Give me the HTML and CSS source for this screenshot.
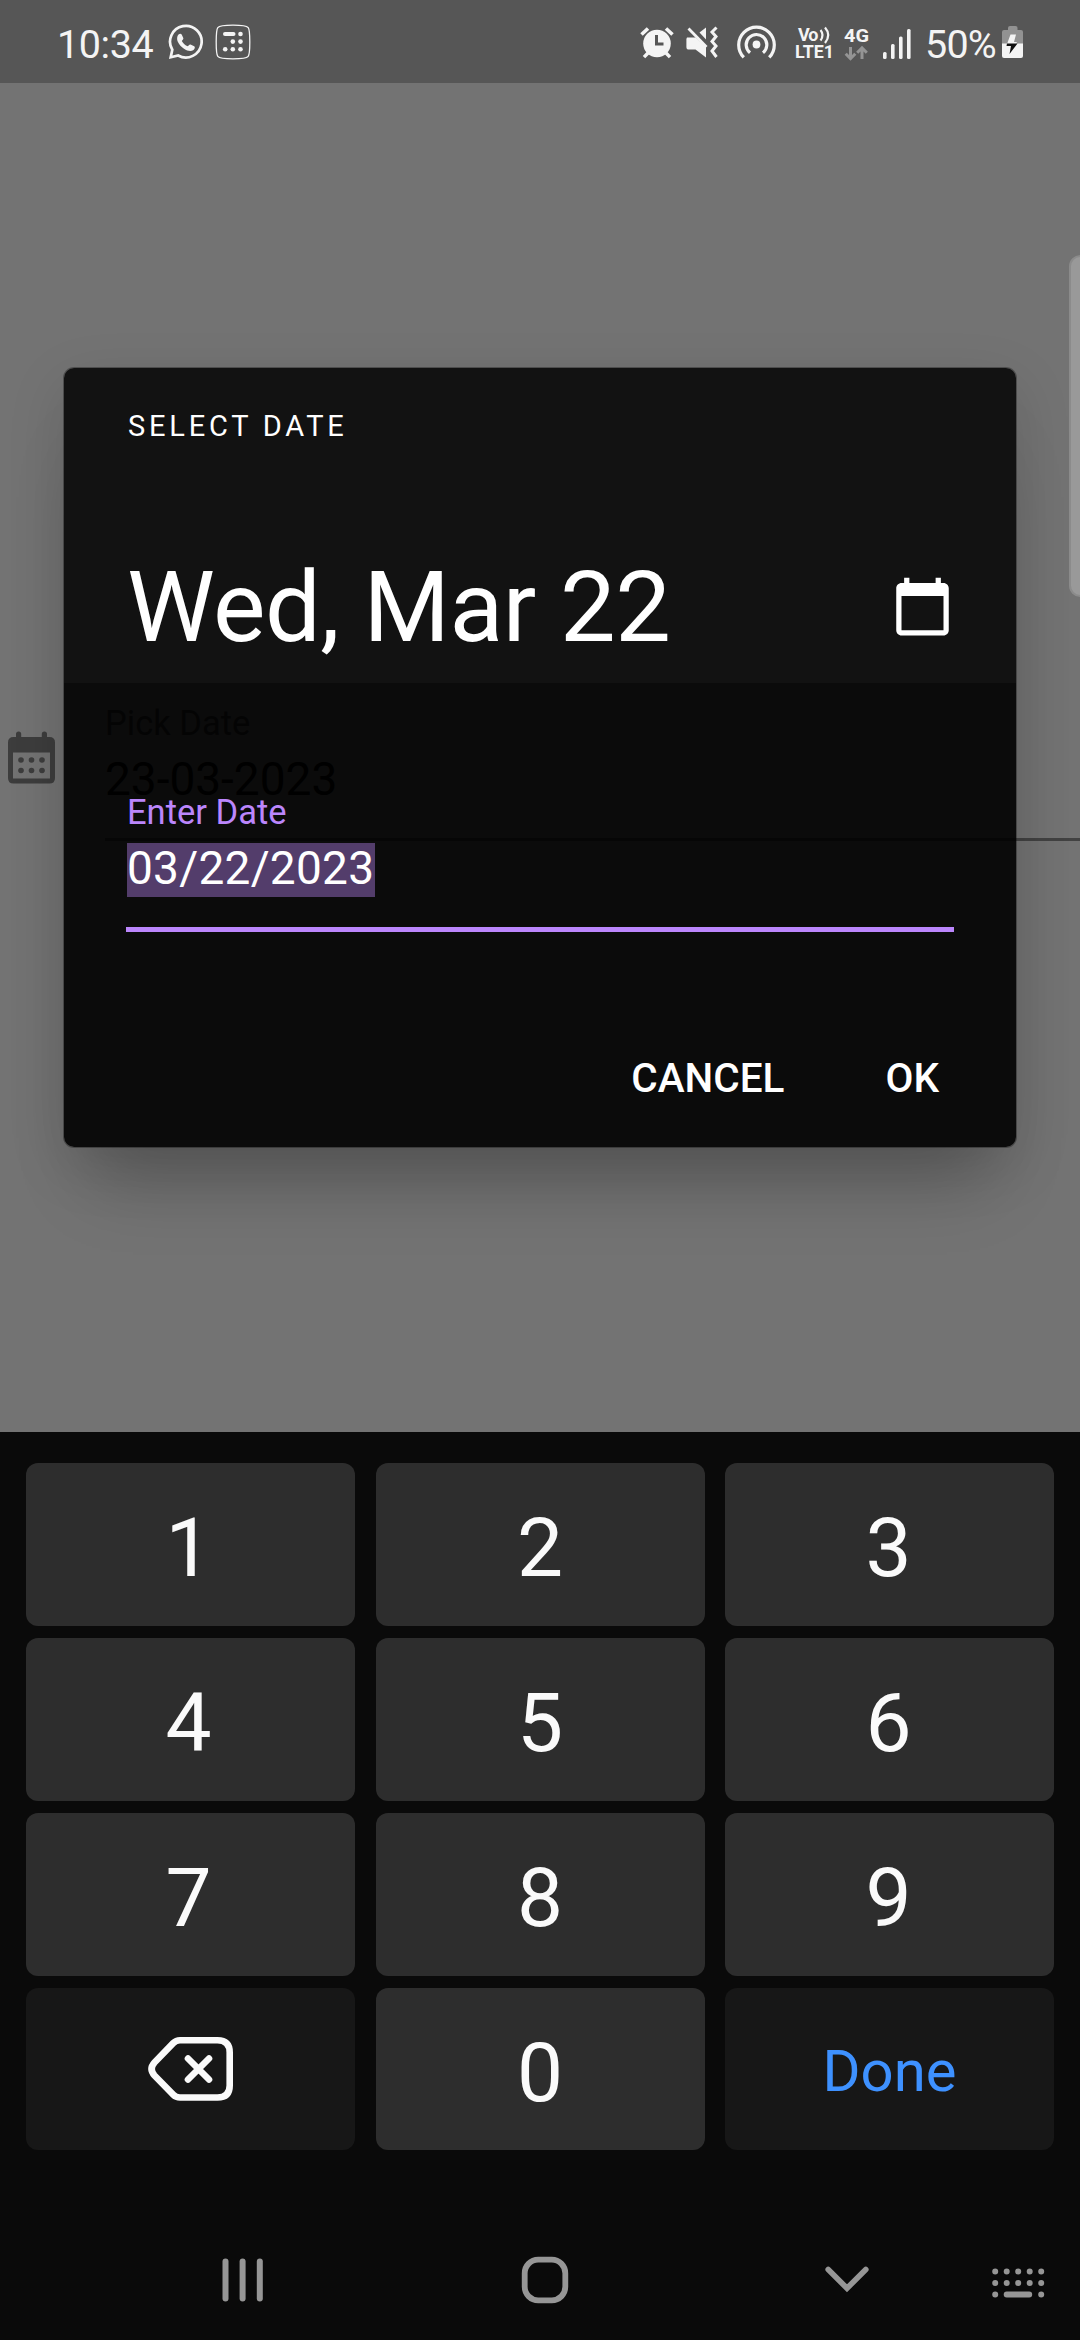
FILE: index.html
```html
<!DOCTYPE html>
<html lang="en">
<head>
<meta charset="utf-8">
<meta name="viewport" content="width=device-width, initial-scale=1">
<title>Select date</title>
<link rel="stylesheet" href="styles.css">
</head>
<body>
<div class="screen">
  <header class="status-bar">
    <div class="status-left">
      <span class="clock">10:34</span>
      <svg class="icon" width="36" height="36" viewBox="0 0 36 36">
        <path d="M2.700 33.300 4.300 25.800A15.800 15.800 0 1 1 10.200 31.500Z" fill="none" stroke="currentColor" stroke-width="2.700"/>
        <path d="M10.500 10.600c1.200-1.300 2.700-1.200 3.300.1l1.500 3.400c.3.800-.2 1.600-1.500 2.900 1.500 2.700 3.400 4.400 6 5.300 1.100-1.300 1.800-2.200 2.700-1.800l3.700 1.800c1.200.7.6 2.600-.7 3.600-2.600 2-6.100 1-9.500-1.200-3.400-2.200-6.300-5.900-6.800-8.900-.3-2.100.2-4 1.300-5.200z" fill="currentColor"/>
      </svg>
      <svg class="icon calc" width="36" height="36" viewBox="0 0 36 36" fill="currentColor">
        <path d="M18 1.200c11 0 14 1 15.200 2.500C34.400 5.200 34.800 9 34.800 18s-.4 12.800-1.600 14.300C32 33.800 29 34.800 18 34.800S4 33.800 2.800 32.300C1.600 30.800 1.200 27 1.200 18s.4-12.800 1.600-14.300C4 2.200 7 1.200 18 1.200z" fill="none" stroke="currentColor" stroke-width="1.300"/>
        <rect x="8" y="8" width="12.500" height="4" rx="2"/>
        <circle cx="25.500" cy="10" r="2.300"/><circle cx="17.800" cy="17.600" r="2.300"/><circle cx="25.500" cy="17.600" r="2.300"/>
        <circle cx="10.200" cy="25.200" r="2.300"/><circle cx="17.800" cy="25.200" r="2.300"/><circle cx="25.500" cy="25.200" r="2.300"/>
      </svg>
    </div>
    <div class="status-right">
      <svg class="icon" width="244" height="83" viewBox="636 0 244 83" fill="currentColor">
        <!-- alarm -->
        <circle cx="657" cy="43.500" r="13.800"/>
        <path d="M641.500 34.500 648 28.500M672.500 34.500 666 28.500" stroke="currentColor" stroke-width="3.600"/>
        <path d="m648 53-4 4.200m22-4.200 4 4.200" stroke="currentColor" stroke-width="3.400"/>
        <path d="M656.500 35v9h7" fill="none" stroke="#565656" stroke-width="3"/>
        <!-- muted speaker with vibration -->
        <path d="M687 37.500h8.500L706 47v10.500L695.500 49.500H689q-2.600 0-2.600-2.600V39z"/>
        <path d="M688.500 28.500 706.500 47" stroke="currentColor" stroke-width="2.800"/>
        <path d="M699.500 32.500 706 27.500V39.500z"/>
        <path d="M716.500 27.500 712 32l4 4.500-4 5 4 4.500-4 5 4.500 6" fill="none" stroke="currentColor" stroke-width="3"/>
        <!-- hotspot -->
        <circle cx="756.500" cy="44.500" r="3.900"/>
        <path d="M750 52.800A10.300 10.300 0 1 1 763 52.800M743.800 57.400A17.800 17.800 0 1 1 769.200 57.400" fill="none" stroke="currentColor" stroke-width="3.200"/>
        <!-- network labels -->
        <text class="net" x="798" y="40.500" textLength="20.500">Vo</text>
        <path d="M820.500 30q4 5 0 10.500M825 27.500q6.500 7.500 0 15.500" fill="none" stroke="currentColor" stroke-width="2.200"/>
        <text class="net" x="795" y="58" textLength="39" lengthAdjust="spacingAndGlyphs">LTE1</text>
        <text class="net" x="844" y="41.500" textLength="25" lengthAdjust="spacingAndGlyphs">4G</text>
        <path d="M850.500 47v11.500m-4.800-4.800 4.800 5 4.800-5M862 59V48m-4.800 4.800 4.800-5 4.800 5" fill="none" stroke="#949494" stroke-width="3"/>
      </svg>
      <svg class="icon signal" width="30" height="32" viewBox="0 0 30 32" fill="currentColor">
        <rect x="0" y="24" width="3.600" height="7" rx="1.500"/><rect x="8" y="16" width="3.600" height="15" rx="1.500"/><rect x="16" y="8.500" width="3.600" height="22.500" rx="1.500"/><rect x="24" y="1" width="3.600" height="30" rx="1.500"/>
      </svg>
      <span class="percent">50%</span>
      <svg class="icon" width="22" height="34" viewBox="0 0 22 34">
        <path d="M6 5V3q0-2 2-2h5.500q2 0 2 2v2H19q2 0 2 2v12H0V7q0-2 2-2z" fill="#929292"/>
        <path d="M0 18.500h21V31q0 2-2 2H2q-2 0-2-2z" fill="#f4f4f4"/>
        <path d="M8.500 9.500h5.500L12 17h3l-1 2H5z" fill="#f4f4f4"/>
        <path d="M5 18.500h10.500L7.500 29l1.500-8H4.500z" fill="#111"/>
      </svg>
    </div>
  </header>

  <main class="app">
    <div class="date-row">
      <svg class="row-icon" width="47" height="53" viewBox="0 0 47 53">
        <path fill="#3d3d3d" fill-rule="evenodd" d="M8 6V3a2.600 2.600 0 0 1 5.200 0v3h20.600V3a2.600 2.600 0 0 1 5.200 0v3h2.500Q47 6 47 11.500V47q0 5.500-5.500 5.500h-36Q0 52.500 0 47V11.500Q0 6 5.500 6zM5 21.500v26h37v-26z"/>
        <g fill="#3d3d3d"><circle cx="13" cy="29" r="2.800"/><circle cx="23.500" cy="29" r="2.800"/><circle cx="34" cy="29" r="2.800"/><circle cx="13" cy="39.500" r="2.800"/><circle cx="23.500" cy="39.500" r="2.800"/><circle cx="34" cy="39.500" r="2.800"/></g>
      </svg>
      <div class="field">
        <div class="field-label">Pick Date</div>
        <div class="field-value">23-03-2023</div>
      </div>
    </div>
    <div class="edge-handle"></div>

    <section class="dialog">
      <div class="dialog-head">
        <div class="overline">SELECT DATE</div>
        <div class="headline">
          <h1>Wed, Mar 22</h1>
          <svg width="63" height="63" viewBox="0 0 24 24" fill="#fff"><path d="M20 3h-1V1h-2v2H7V1H5v2H4c-1.100 0-2 .9-2 2v16c0 1.100.9 2 2 2h16c1.100 0 2-.9 2-2V5c0-1.100-.9-2-2-2zm0 18H4V8h16v13z"/></svg>
        </div>
      </div>
      <div class="dialog-body">
        <div class="input">
          <div class="input-label">Enter Date</div>
          <div class="input-value"><span class="selection">03/22/2023</span></div>
        </div>
        <div class="actions">
          <span class="action cancel">CANCEL</span>
          <span class="action">OK</span>
        </div>
      </div>
    </section>
  </main>

  <section class="keyboard">
    <div class="keys">
      <div class="key">1</div><div class="key">2</div><div class="key">3</div>
      <div class="key">4</div><div class="key">5</div><div class="key">6</div>
      <div class="key">7</div><div class="key">8</div><div class="key">9</div>
      <div class="key dark">
        <svg width="86" height="66" viewBox="0 0 86 66" fill="none" stroke="#fafafa" stroke-width="6.600" stroke-linecap="round">
          <path d="M32 4.300H69.500Q81.700 4.300 81.700 16.500V49.500Q81.700 61.500 69.500 61.500H32Q28 61.500 25.200 58.700L6.500 39.500Q.7 33 6.500 26.500L25.200 7.100Q28 4.300 32 4.300Z"/>
          <path d="M40 22.500 61 43.500M61 22.500 40 43.500"/>
        </svg>
      </div>
      <div class="key">0</div>
      <div class="key dark done">Done</div>
    </div>
    <nav class="nav">
      <svg width="42" height="44" viewBox="0 0 42 44" fill="#969696"><rect x="0.500" y="0.500" width="6" height="43" rx="3"/><rect x="17.600" y="0.500" width="6" height="43" rx="3"/><rect x="34.800" y="0.500" width="6" height="43" rx="3"/></svg>
      <svg class="home" width="48" height="48" viewBox="0 0 48 48" fill="none" stroke="#969696" stroke-width="5.800"><rect x="3.700" y="3.700" width="40.600" height="40.600" rx="13.500"/></svg>
      <svg class="down" width="44" height="28" viewBox="0 0 44 28" fill="none" stroke="#969696" stroke-width="5.600" stroke-linecap="round"><path d="M3.200 3.500 22 22.300 40.800 3.500"/></svg>
      <svg class="switcher" width="53" height="30" viewBox="0 0 53 30" fill="none" stroke="#969696" stroke-width="6" stroke-linecap="round"><path d="M3.200 3.500h46.500M3.200 15h46.500" stroke-dasharray="0 11.500"/><path d="M3.200 26.500h0M14.700 26.500h22.500M49.200 26.500h0"/></svg>
    </nav>
  </section>
</div>
</body>
</html>
```
FILE: styles.css
```css
* { box-sizing: border-box; }

body {
  margin: 0;
  font-family: Roboto, "Noto Sans", sans-serif;
  color: #fff;
}

svg { display: block; flex: none; }

.screen {
  display: flex;
  flex-direction: column;
  width: 1080px;
  height: 2340px;
  overflow: hidden;
  background: #737373;
}

/* Status bar */
.status-bar {
  display: flex;
  justify-content: space-between;
  height: 83px;
  padding: 0 56px 0 57px;
  background: #565656;
  color: #f4f4f4;
}

.status-left,
.status-right {
  display: flex;
  align-items: center;
}

.clock,
.percent {
  font-size: 39.5px;
  line-height: 46px;
  letter-spacing: -.4px;
  white-space: nowrap;
  padding-top: 6px;
}

.clock { width: 111px; }
.calc { margin-left: 11px; }
.signal { margin: 5px 12px 0 3px; }
.percent { width: 77px; letter-spacing: -.8px; }
.net { font-size: 18px; font-weight: 700; }

/* App screen behind the dialog */
.app {
  position: relative;
  height: 1349px;
  padding-top: 603px;
}

.date-row {
  display: flex;
  padding-left: 8px;
}

.row-icon { margin: 45px 50px 0 0; }

.field {
  flex: 1;
  height: 155px;
  padding-top: 17px;
  border-bottom: 3px solid rgba(0, 0, 0, .42);
}

.field-label {
  font-size: 34.5px;
  line-height: 40px;
  color: rgba(0, 0, 0, .6);
}

.field-value {
  margin-top: 9px;
  font-size: 46px;
  line-height: 54px;
  color: #000;
}

.edge-handle {
  position: absolute;
  top: 172px;
  right: -12px;
  width: 23px;
  height: 342px;
  border: 2px solid #8b8b8b;
  border-radius: 12px;
  background: #999;
}

/* Dialog */
.dialog {
  position: absolute;
  top: 285px;
  left: 64px;
  width: 952px;
  height: 779px;
  border-radius: 10px;
  box-shadow:
    0 0 0 1px rgba(0, 0, 0, .3),
    0 60px 70px -28px rgba(0, 0, 0, .22),
    0 18px 60px rgba(0, 0, 0, .12);
}

.dialog-head {
  height: 315px;
  padding: 41px 62px 0 64px;
  border-radius: 10px 10px 0 0;
  background: #121212;
}

.overline {
  font-size: 29px;
  line-height: 34px;
  letter-spacing: 3.8px;
}

.headline {
  display: flex;
  justify-content: space-between;
  margin-top: 106px;
}

.headline h1 {
  margin: 0 0 0 -1px;
  font-size: 99px;
  line-height: 116px;
  font-weight: 400;
  letter-spacing: -.45px;
  white-space: nowrap;
}

.headline svg { margin-top: 26px; }

.dialog-body {
  height: 464px;
  padding: 108px 62px 0;
  border-radius: 0 0 10px 10px;
  background: rgba(0, 0, 0, .905);
}

.input {
  height: 141px;
  padding-top: 1px;
  border-bottom: 5px solid #bb86fc;
}

.input-label {
  padding-left: 1px;
  font-size: 34.5px;
  line-height: 40px;
  color: #bb86fc;
}

.input-value {
  margin-top: 11px;
  font-size: 46px;
  line-height: 50px;
}

.selection {
  display: inline-block;
  width: 248px;
  margin-left: 1px;
  padding-bottom: 4px;
  background: #533d6b;
  letter-spacing: .25px;
  white-space: nowrap;
}

.actions {
  display: flex;
  justify-content: flex-end;
  padding: 122px 15px 0 0;
}

.action {
  font-size: 40.5px;
  line-height: 48px;
  font-weight: 500;
}

.cancel { margin-right: 101px; }

/* Numeric keyboard */
.keyboard {
  height: 908px;
  padding: 31px 26px 0;
  background: #0a0a0a;
}

.keys {
  display: grid;
  grid-template-columns: repeat(3, 1fr);
  grid-template-rows: 163px 163px 163px 162px;
  gap: 12px 20.5px;
}

.key {
  display: flex;
  align-items: center;
  justify-content: center;
  padding-top: 7px;
  border-radius: 12px;
  background: #2d2d2d;
  color: #fafafa;
  font-size: 82px;
  line-height: 96px;
}

.key:nth-child(3n + 1):not(.dark) { padding-right: 4px; }
.key:nth-child(3n):not(.dark) { padding-right: 2px; }

.dark { background: #171717; padding-top: 0; }

.done {
  color: #3e91ff;
  font-size: 58px;
  padding-top: 4px;
}

.nav {
  display: flex;
  align-items: center;
  height: 125px;
  margin-top: 67px;
  padding-left: 196px;
}

.home { margin-left: 257px; }
.down { margin: 1px 0 0 256px; }
.switcher { margin: 6px 0 0 123px; }
```
